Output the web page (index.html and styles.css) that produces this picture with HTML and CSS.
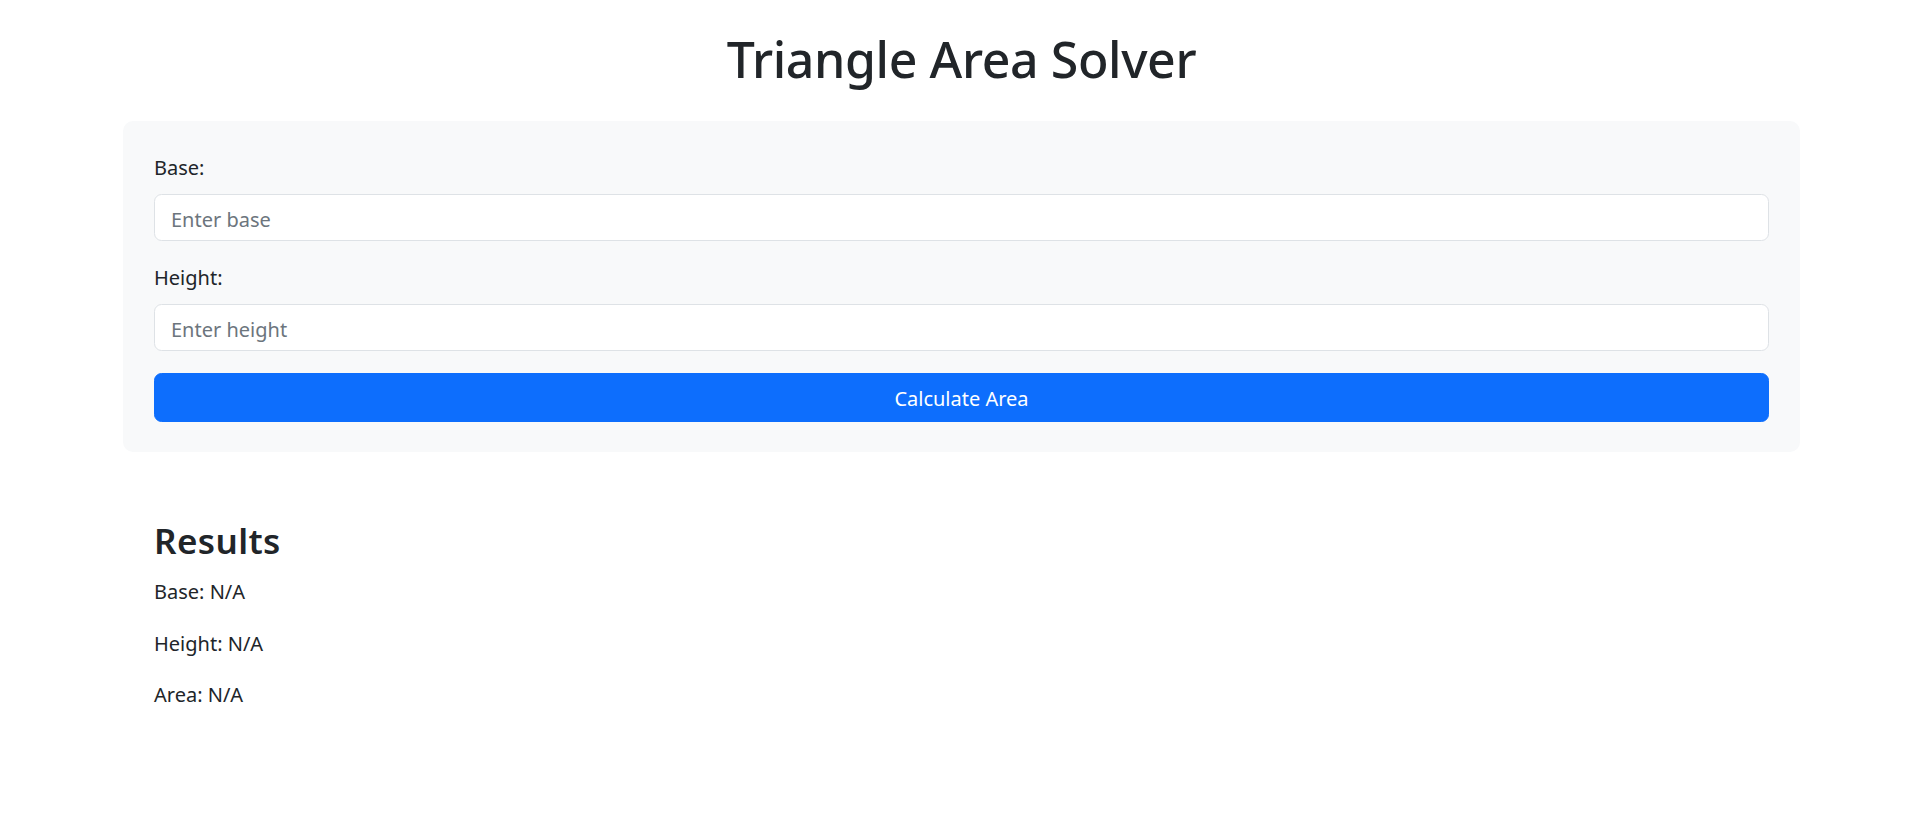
FILE: index.html
```html
<!DOCTYPE html>
<html lang="en">
<head>
<meta charset="utf-8">
<title>Triangle Area Solver</title>
<link rel="stylesheet" href="styles.css">
</head>
<body>
  <div class="container">
    <h1 class="title">Triangle Area Solver</h1>
    <form class="card">
      <div class="field">
        <label class="label" for="base">Base:</label>
        <input class="input" id="base" type="text" placeholder="Enter base">
      </div>
      <div class="field">
        <label class="label" for="height">Height:</label>
        <input class="input" id="height" type="text" placeholder="Enter height">
      </div>
      <button class="btn" type="button">Calculate Area</button>
    </form>
    <section class="results">
      <h3 class="results-title">Results</h3>
      <p class="result">Base: N/A</p>
      <p class="result">Height: N/A</p>
      <p class="result">Area: N/A</p>
    </section>
  </div>
</body>
</html>
```
FILE: styles.css
```css
* { box-sizing: border-box; }
html, body { margin: 0; padding: 0; background: #fff; }
body {
  font-family: "Noto Sans", "Open Sans", sans-serif;
  font-size: 20px;
  line-height: 1.5;
  color: #212529;
}
.container {
  width: 1677px;
  margin-left: 123px;
}
.title {
  margin: 29px 0 32px;
  font-size: 50px;
  font-weight: 500;
  letter-spacing: -0.4px;
  line-height: 1.2;
  text-align: center;
}
.card {
  margin: 0;
  background: #f8f9fa;
  border-radius: 10px;
  padding: 32px 31px 30px 31px;
}
.field { margin-bottom: 22px; }
.field + .field .label { margin-top: 2px; }
.label {
  display: block;
  line-height: 30px;
  margin-bottom: 11px;
}
.input {
  display: block;
  width: 100%;
  height: 47px;
  padding: 3px 16px 0;
  font: inherit;
  font-size: 20px;
  color: #212529;
  background: #fff;
  border: 1px solid #dee2e6;
  border-radius: 7.5px;
  outline: none;
}
.input::placeholder { color: #6c757d; opacity: 1; }
.btn {
  display: block;
  width: 100%;
  height: 49px;
  padding: 2px 0 0;
  font: inherit;
  font-size: 20px;
  color: #fff;
  background: #0d6efd;
  border: 1px solid #0d6efd;
  border-radius: 7.5px;
  cursor: pointer;
}
.results {
  margin-top: 39px;
  padding: 29px 31px;
}
.results-title {
  margin: 0 0 15px;
  font-size: 35px;
  font-weight: 600;
  letter-spacing: 0.4px;
  line-height: 1.2;
}
.result {
  margin: 0 0 21.5px;
  line-height: 30px;
}
```
